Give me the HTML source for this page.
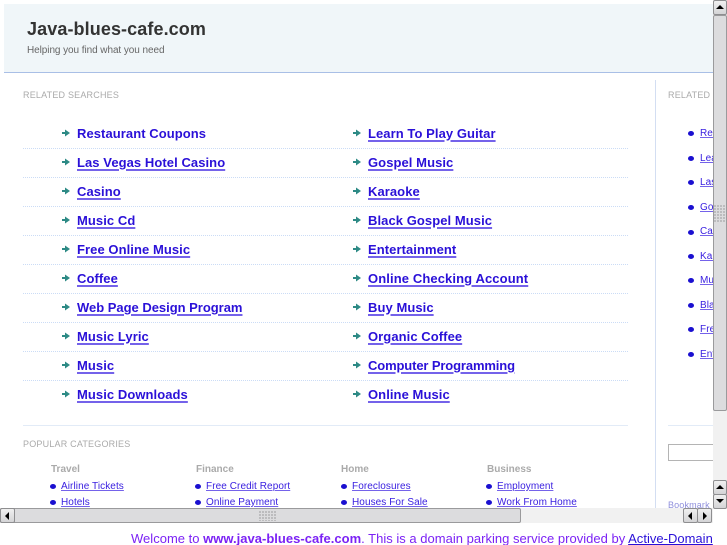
<!DOCTYPE html>
<html><head><meta charset="utf-8"><style>
html,body{margin:0;padding:0;background:#fff;}
body{width:727px;height:545px;position:relative;overflow:hidden;font-family:"Liberation Sans",sans-serif;}
#w{position:absolute;left:0;top:0;width:727px;height:545px;overflow:hidden;filter:blur(.35px);}
.a{position:absolute;white-space:nowrap;}
.l{position:absolute;white-space:nowrap;font-weight:bold;font-size:13px;line-height:16px;letter-spacing:.07px;margin-top:1px;color:#2a10d8;text-decoration:underline;text-decoration-color:#7462ea;text-decoration-thickness:1.5px;text-underline-offset:2px;}
.d{position:absolute;height:0;border-top:1px dotted #cbdcf6;left:23px;width:605px;}
.ar{position:absolute;width:8px;height:8px;}
.bu{position:absolute;width:6px;height:5px;border-radius:50%;background:#1a0fd0;}
.s{position:absolute;white-space:nowrap;font-size:10px;line-height:13px;letter-spacing:.08px;margin-top:1px;color:#3a20e0;text-decoration:underline;text-decoration-color:#7462ea;}
.h{position:absolute;white-space:nowrap;font-size:10px;font-weight:bold;line-height:13px;color:#aaa;margin-top:1px;}
.t{position:absolute;white-space:nowrap;font-size:9px;line-height:12px;color:#aaa;letter-spacing:.2px;}
.btn{position:absolute;background:linear-gradient(#f0f0f0,#d4d4d6);border:1px solid #8e8e90;box-sizing:border-box;border-radius:2px;}
.tri{position:absolute;width:0;height:0;}
</style></head><body><div id="w">
<div class="a" style="left:4px;top:4px;width:709px;height:68px;background:#f0f6f9;border-bottom:1.5px solid #a9bfe6;"></div>
<div class="a" style="left:27px;top:18px;font-size:18px;line-height:22px;font-weight:bold;color:#333;letter-spacing:.1px;">Java-blues-cafe.com</div>
<div class="a" style="left:27px;top:44px;font-size:10px;line-height:14px;color:#666;letter-spacing:-.07px;">Helping you find what you need</div>
<div class="t" style="left:23px;top:89px;">RELATED SEARCHES</div>
<div class="a" style="left:655px;top:80px;width:1px;height:430px;background:#d3def2;"></div>
<div class="t" style="left:668px;top:89px;">RELATED</div>

<svg class="ar" style="left:62px;top:129px" viewBox="0 0 8 8"><path d="M0 3h3V0.5L8 4 3 7.5V5H0z" fill="#2d8a85"/></svg>
<div class="l" style="left:77px;top:125px;text-decoration:none;">Restaurant Coupons</div>
<svg class="ar" style="left:62px;top:158px" viewBox="0 0 8 8"><path d="M0 3h3V0.5L8 4 3 7.5V5H0z" fill="#2d8a85"/></svg>
<div class="l" style="left:77px;top:154px;">Las Vegas Hotel Casino</div>
<svg class="ar" style="left:62px;top:187px" viewBox="0 0 8 8"><path d="M0 3h3V0.5L8 4 3 7.5V5H0z" fill="#2d8a85"/></svg>
<div class="l" style="left:77px;top:183px;">Casino</div>
<svg class="ar" style="left:62px;top:216px" viewBox="0 0 8 8"><path d="M0 3h3V0.5L8 4 3 7.5V5H0z" fill="#2d8a85"/></svg>
<div class="l" style="left:77px;top:212px;">Music Cd</div>
<svg class="ar" style="left:62px;top:245px" viewBox="0 0 8 8"><path d="M0 3h3V0.5L8 4 3 7.5V5H0z" fill="#2d8a85"/></svg>
<div class="l" style="left:77px;top:241px;">Free Online Music</div>
<svg class="ar" style="left:62px;top:274px" viewBox="0 0 8 8"><path d="M0 3h3V0.5L8 4 3 7.5V5H0z" fill="#2d8a85"/></svg>
<div class="l" style="left:77px;top:270px;">Coffee</div>
<svg class="ar" style="left:62px;top:303px" viewBox="0 0 8 8"><path d="M0 3h3V0.5L8 4 3 7.5V5H0z" fill="#2d8a85"/></svg>
<div class="l" style="left:77px;top:299px;letter-spacing:-.02px;">Web Page Design Program</div>
<svg class="ar" style="left:62px;top:332px" viewBox="0 0 8 8"><path d="M0 3h3V0.5L8 4 3 7.5V5H0z" fill="#2d8a85"/></svg>
<div class="l" style="left:77px;top:328px;">Music Lyric</div>
<svg class="ar" style="left:62px;top:361px" viewBox="0 0 8 8"><path d="M0 3h3V0.5L8 4 3 7.5V5H0z" fill="#2d8a85"/></svg>
<div class="l" style="left:77px;top:357px;">Music</div>
<svg class="ar" style="left:62px;top:390px" viewBox="0 0 8 8"><path d="M0 3h3V0.5L8 4 3 7.5V5H0z" fill="#2d8a85"/></svg>
<div class="l" style="left:77px;top:386px;">Music Downloads</div>

<svg class="ar" style="left:353px;top:129px" viewBox="0 0 8 8"><path d="M0 3h3V0.5L8 4 3 7.5V5H0z" fill="#2d8a85"/></svg>
<div class="l" style="left:368px;top:125px;">Learn To Play Guitar</div>
<svg class="ar" style="left:353px;top:158px" viewBox="0 0 8 8"><path d="M0 3h3V0.5L8 4 3 7.5V5H0z" fill="#2d8a85"/></svg>
<div class="l" style="left:368px;top:154px;">Gospel Music</div>
<svg class="ar" style="left:353px;top:187px" viewBox="0 0 8 8"><path d="M0 3h3V0.5L8 4 3 7.5V5H0z" fill="#2d8a85"/></svg>
<div class="l" style="left:368px;top:183px;">Karaoke</div>
<svg class="ar" style="left:353px;top:216px" viewBox="0 0 8 8"><path d="M0 3h3V0.5L8 4 3 7.5V5H0z" fill="#2d8a85"/></svg>
<div class="l" style="left:368px;top:212px;">Black Gospel Music</div>
<svg class="ar" style="left:353px;top:245px" viewBox="0 0 8 8"><path d="M0 3h3V0.5L8 4 3 7.5V5H0z" fill="#2d8a85"/></svg>
<div class="l" style="left:368px;top:241px;">Entertainment</div>
<svg class="ar" style="left:353px;top:274px" viewBox="0 0 8 8"><path d="M0 3h3V0.5L8 4 3 7.5V5H0z" fill="#2d8a85"/></svg>
<div class="l" style="left:368px;top:270px;letter-spacing:.11px;">Online Checking Account</div>
<svg class="ar" style="left:353px;top:303px" viewBox="0 0 8 8"><path d="M0 3h3V0.5L8 4 3 7.5V5H0z" fill="#2d8a85"/></svg>
<div class="l" style="left:368px;top:299px;">Buy Music</div>
<svg class="ar" style="left:353px;top:332px" viewBox="0 0 8 8"><path d="M0 3h3V0.5L8 4 3 7.5V5H0z" fill="#2d8a85"/></svg>
<div class="l" style="left:368px;top:328px;">Organic Coffee</div>
<svg class="ar" style="left:353px;top:361px" viewBox="0 0 8 8"><path d="M0 3h3V0.5L8 4 3 7.5V5H0z" fill="#2d8a85"/></svg>
<div class="l" style="left:368px;top:357px;letter-spacing:-.13px;">Computer Programming</div>
<svg class="ar" style="left:353px;top:390px" viewBox="0 0 8 8"><path d="M0 3h3V0.5L8 4 3 7.5V5H0z" fill="#2d8a85"/></svg>
<div class="l" style="left:368px;top:386px;">Online Music</div>

<div class="d" style="top:148px"></div><div class="d" style="top:177px"></div><div class="d" style="top:206px"></div><div class="d" style="top:235px"></div><div class="d" style="top:264px"></div><div class="d" style="top:293px"></div><div class="d" style="top:322px"></div><div class="d" style="top:351px"></div><div class="d" style="top:380px"></div>

<div class="a" style="left:23px;top:425px;width:605px;height:1px;background:#e2ebf7;"></div>
<div class="a" style="left:668px;top:425px;width:45px;height:1px;background:#e2ebf7;"></div>
<div class="t" style="left:23px;top:438px;">POPULAR CATEGORIES</div>

<div class="h" style="left:51px;top:462px;">Travel</div><div class="h" style="left:196px;top:462px;">Finance</div><div class="h" style="left:341px;top:462px;">Home</div><div class="h" style="left:487px;top:462px;">Business</div>
<div class="bu" style="left:50px;top:484px"></div><div class="s" style="left:61px;top:479px;">Airline Tickets</div>
<div class="bu" style="left:50px;top:500px"></div><div class="s" style="left:61px;top:495px;">Hotels</div>
<div class="bu" style="left:195px;top:484px"></div><div class="s" style="left:206px;top:479px;">Free Credit Report</div>
<div class="bu" style="left:195px;top:500px"></div><div class="s" style="left:206px;top:495px;">Online Payment</div>
<div class="bu" style="left:341px;top:484px"></div><div class="s" style="left:352px;top:479px;">Foreclosures</div>
<div class="bu" style="left:341px;top:500px"></div><div class="s" style="left:352px;top:495px;">Houses For Sale</div>
<div class="bu" style="left:486px;top:484px"></div><div class="s" style="left:497px;top:479px;">Employment</div>
<div class="bu" style="left:486px;top:500px"></div><div class="s" style="left:497px;top:495px;">Work From Home</div>

<div class="bu" style="left:688px;top:131px"></div><div class="s" style="left:700px;top:126px;">Restaurant</div>
<div class="bu" style="left:688px;top:156px"></div><div class="s" style="left:700px;top:151px;">Learn</div>
<div class="bu" style="left:688px;top:180px"></div><div class="s" style="left:700px;top:175px;">Las</div>
<div class="bu" style="left:688px;top:205px"></div><div class="s" style="left:700px;top:200px;">Gospel</div>
<div class="bu" style="left:688px;top:230px"></div><div class="s" style="left:700px;top:224px;">Casino</div>
<div class="bu" style="left:688px;top:254px"></div><div class="s" style="left:700px;top:249px;">Karaoke</div>
<div class="bu" style="left:688px;top:278px"></div><div class="s" style="left:700px;top:273px;">Music</div>
<div class="bu" style="left:688px;top:303px"></div><div class="s" style="left:700px;top:298px;">Black</div>
<div class="bu" style="left:688px;top:327px"></div><div class="s" style="left:700px;top:322px;">Free</div>
<div class="bu" style="left:688px;top:352px"></div><div class="s" style="left:700px;top:347px;">Entertainment</div>
<div class="a" style="left:668px;top:444px;width:46px;height:17px;box-sizing:border-box;border:1px solid #b4b4b4;background:#fff;"></div>
<div class="a" style="left:668px;top:499px;font-size:9px;line-height:13px;color:#8f8fdc;letter-spacing:.15px;">Bookmark</div>

<!-- vertical scrollbar -->
<div class="a" style="left:713px;top:0;width:14px;height:508px;background:#f1f1f1;"></div>
<div class="btn" style="left:713px;top:0;width:14px;height:15px;"></div>
<div class="tri" style="left:716px;top:5px;border-left:4px solid transparent;border-right:4px solid transparent;border-bottom:4px solid #000;"></div>
<div class="a" style="left:713px;top:15px;width:14px;height:396px;box-sizing:border-box;border:1px solid #9a9a9c;background:#dcdcde;border-radius:2px;"></div>
<svg class="a" style="left:714px;top:205px" width="12" height="18"><defs><pattern id="g" width="3" height="3" patternUnits="userSpaceOnUse"><rect width="2" height="2" fill="#bcbcbe"/></pattern></defs><rect width="12" height="18" fill="url(#g)"/></svg>
<div class="btn" style="left:713px;top:480px;width:14px;height:15px;"></div>
<div class="tri" style="left:716px;top:485px;border-left:4px solid transparent;border-right:4px solid transparent;border-bottom:4px solid #000;"></div>
<div class="btn" style="left:713px;top:494px;width:14px;height:15px;"></div>
<div class="tri" style="left:716px;top:499px;border-left:4px solid transparent;border-right:4px solid transparent;border-top:4px solid #000;"></div>

<!-- horizontal scrollbar -->
<div class="a" style="left:0;top:508px;width:713px;height:15px;background:#f1f1f1;"></div>
<div class="a" style="left:0;top:508px;width:521px;height:15px;box-sizing:border-box;border:1px solid #9a9a9c;background:#dcdcde;border-radius:2px;"></div>
<svg class="a" style="left:259px;top:511px" width="18" height="10"><defs><pattern id="g2" width="3" height="3" patternUnits="userSpaceOnUse"><rect width="2" height="2" fill="#bcbcbe"/></pattern></defs><rect width="18" height="10" fill="url(#g2)"/></svg>
<div class="btn" style="left:0;top:508px;width:15px;height:15px;"></div>
<div class="tri" style="left:5px;top:512px;border-top:4px solid transparent;border-bottom:4px solid transparent;border-right:4px solid #000;"></div>
<div class="btn" style="left:683px;top:508px;width:15px;height:15px;"></div>
<div class="tri" style="left:688px;top:512px;border-top:4px solid transparent;border-bottom:4px solid transparent;border-right:4px solid #000;"></div>
<div class="btn" style="left:697px;top:508px;width:15px;height:15px;"></div>
<div class="tri" style="left:703px;top:512px;border-top:4px solid transparent;border-bottom:4px solid transparent;border-left:4px solid #000;"></div>

<div class="a" style="left:131px;top:531px;font-size:13px;line-height:16px;color:#7b22f5;letter-spacing:.012px;">Welcome to <b>www.java-blues-cafe.com</b>. This is a domain parking service provided by <span style="color:#2a10d8;text-decoration:underline;">Active-Domain</span></div>
</div></body></html>
